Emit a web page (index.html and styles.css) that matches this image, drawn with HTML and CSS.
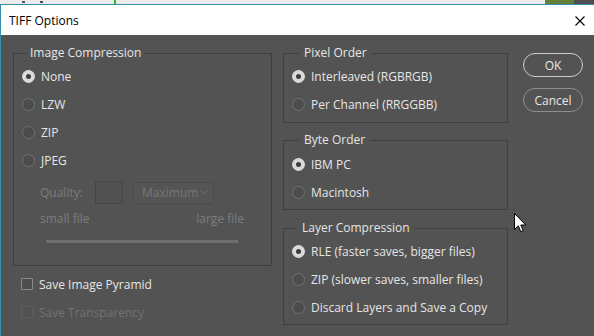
FILE: index.html
```html
<!DOCTYPE html>
<html>
<head>
<meta charset="utf-8">
<title>TIFF Options</title>
<link rel="stylesheet" href="styles.css">
</head>
<body>
<div class="backdrop">
  <span class="specks">
    <svg width="24" height="4" viewBox="0 0 24 4"><rect x="0" y="1" width="3" height="2" fill="#5a5a5a"/><rect x="18" y="1" width="3" height="2" fill="#4a4a4a"/></svg>
  </span>
  <span class="green-line"></span>
  <span class="fill"></span>
  <span class="green-block"></span>
  <span class="dark-block"></span>
</div>
<div class="dialog">
  <div class="titlebar">
    <span class="title">TIFF Options</span>
    <svg class="close" viewBox="0 0 10 10"><path d="M0.5 0.5 L9.5 9.5 M9.5 0.5 L0.5 9.5" stroke="#000" stroke-width="1.1" fill="none"/></svg>
  </div>
  <div class="body">
    <div class="col-left">
      <fieldset class="group group-img">
        <legend class="legend-img">Image Compression</legend>
        <div class="radio-row"><span class="radio on"></span><span>None</span></div>
        <div class="radio-row"><span class="radio"></span><span>LZW</span></div>
        <div class="radio-row"><span class="radio"></span><span>ZIP</span></div>
        <div class="radio-row"><span class="radio"></span><span>JPEG</span></div>
        <div class="quality-row">
          <span class="dim quality-label">Quality:</span>
          <span class="qbox"></span>
          <span class="select"><span>Maximum</span><svg class="chev" viewBox="0 0 8 5"><path d="M0.5 0.5 L4 4 L7.5 0.5" stroke="#6f6f6f" fill="none"/></svg></span>
        </div>
        <div class="size-row dim"><span>small file</span><span>large file</span></div>
        <div class="slider"></div>
      </fieldset>
      <div class="check-row"><span class="check"></span><span>Save Image Pyramid</span></div>
      <div class="check-row disabled"><span class="check"></span><span>Save Transparency</span></div>
    </div>
    <div class="col-mid">
      <fieldset class="group group-pixel">
        <legend class="legend-mid">Pixel Order</legend>
        <div class="radio-row"><span class="radio on"></span><span>Interleaved (RGBRGB)</span></div>
        <div class="radio-row"><span class="radio"></span><span>Per Channel (RRGGBB)</span></div>
      </fieldset>
      <fieldset class="group group-byte">
        <legend class="legend-mid">Byte Order</legend>
        <div class="radio-row"><span class="radio on"></span><span>IBM PC</span></div>
        <div class="radio-row"><span class="radio"></span><span>Macintosh</span></div>
      </fieldset>
      <fieldset class="group group-layer">
        <legend class="legend-layer">Layer Compression</legend>
        <div class="radio-row"><span class="radio on"></span><span>RLE (faster saves, bigger files)</span></div>
        <div class="radio-row"><span class="radio"></span><span>ZIP (slower saves, smaller files)</span></div>
        <div class="radio-row"><span class="radio"></span><span>Discard Layers and Save a Copy</span></div>
      </fieldset>
    </div>
    <div class="col-btn">
      <button class="btn btn-default">OK</button>
      <button class="btn">Cancel</button>
    </div>
  </div>
</div>
<svg class="cursor" viewBox="0 0 13 20" width="13" height="20"><path d="M0.5 0.5 L0.5 16.5 L4.3 12.8 L6.8 18.7 L9.2 17.7 L6.8 12 L11.8 12 Z" fill="#fff" stroke="#000" stroke-width="1"/></svg>
</body>
</html>
```
FILE: styles.css
```css
* { box-sizing: border-box; }
html, body { margin: 0; padding: 0; }
body {
  width: 594px;
  height: 336px;
  overflow: hidden;
  position: relative;
  background: #535353;
  font-family: "Open Sans", "Noto Sans", sans-serif;
  font-size: 12px;
  color: #e6e6e6;
}
.backdrop {
  height: 4px;
  background: #ececec;
  display: flex;
}
.specks { width: 24px; margin-left: 22px; display: block; height: 4px; }
.specks svg { display: block; }
.green-line { width: 2px; margin-left: 68px; background: #22c02a; }
.fill { flex: 1; }
.green-block { width: 29px; background: #62803a; }
.dark-block { width: 20px; background: #4e4e4e; }

.dialog {
  border-top: 1px solid #3a8fa8;
  border-left: 1px solid #3a8fa8;
}
.titlebar {
  height: 30px;
  background: #fff;
  display: flex;
  align-items: center;
  justify-content: space-between;
  padding: 0 9px 0 8px;
}
.title { color: #000; font-size: 12px; }
.close { width: 10px; height: 10px; margin-top: 2px; }

.body {
  height: 301px;
  background: #535353;
  display: flex;
  padding: 10px 0 0 12px;
}
.col-left { width: 259px; display: flex; flex-direction: column; }
.col-mid { width: 225px; margin-left: 11px; display: flex; flex-direction: column; gap: 10px; }
.col-btn { margin-left: 15px; padding-top: 8px; display: flex; flex-direction: column; gap: 11px; }

.group {
  margin: 0;
  border: 1px solid #3f3f3f;
  padding: 1px 8px 0;
  min-width: 0;
}
.group legend {
  line-height: 16px;
  color: #e6e6e6;
}
.legend-img { margin-left: 5px; padding: 0 3px; }
.legend-mid { margin-left: 7px; padding: 0 5px; }
.legend-layer { margin-left: 5px; padding: 0 5px; }

.group-img { padding-bottom: 22px; }
.group-pixel { padding-bottom: 4px; margin-bottom: -1px; }
.group-byte { padding-top: 2px; padding-bottom: 3px; }
.group-layer { padding-bottom: 3px; }

.radio-row {
  height: 28px;
  display: flex;
  align-items: center;
  gap: 6px;
}
.radio {
  width: 13px;
  height: 13px;
  border-radius: 50%;
  border: 1px solid #727272;
  background: #4c4c4c;
  flex: none;
  display: flex;
  align-items: center;
  justify-content: center;
}
.radio.on {
  background: #dadada;
  border-color: #dadada;
}
.radio.on::after {
  content: "";
  width: 5px;
  height: 5px;
  border-radius: 50%;
  background: #3d3d3d;
}

.dim { color: #7c7c7c; }
.quality-row {
  margin-top: 7px;
  height: 23px;
  display: flex;
  align-items: center;
  padding-left: 18px;
}
.quality-label { width: 55px; }
.qbox {
  width: 28px;
  height: 23px;
  border: 1px solid #464646;
  background: #515151;
}
.select {
  margin-left: 10px;
  width: 81px;
  height: 22px;
  border: 1px solid #4a4a4a;
  border-radius: 2px;
  background: #555;
  color: #777;
  display: flex;
  align-items: center;
  justify-content: space-between;
  padding: 0 5px 0 8px;
}
.chev { width: 8px; height: 5px; }
.size-row {
  margin-top: 7px;
  line-height: 16px;
  display: flex;
  justify-content: space-between;
  padding: 0 19px 0 18px;
}
.slider {
  margin-top: 13px;
  margin-left: 24px;
  width: 192px;
  height: 3px;
  background: #6e6e6e;
}

.check-row {
  margin-top: 4px;
  height: 28px;
  display: flex;
  align-items: center;
  gap: 6px;
  padding-left: 8px;
}
.check-row + .check-row { margin-top: 0; }
.check {
  width: 12px;
  height: 12px;
  border: 1px solid #8a8a8a;
  border-radius: 1px;
  background: #4e4e4e;
}
.check-row.disabled { color: #727272; }
.check-row.disabled .check { border-color: #5e5e5e; background: #515151; }

.btn {
  width: 60px;
  height: 24px;
  border-radius: 12px;
  border: 1px solid #8e8e8e;
  background: #535353;
  color: #e6e6e6;
  font-family: inherit;
  font-size: 12px;
  padding: 0;
}
.btn-default { border-color: #cfcfcf; }

.cursor {
  position: absolute;
  left: 514px;
  top: 213px;
}
```
